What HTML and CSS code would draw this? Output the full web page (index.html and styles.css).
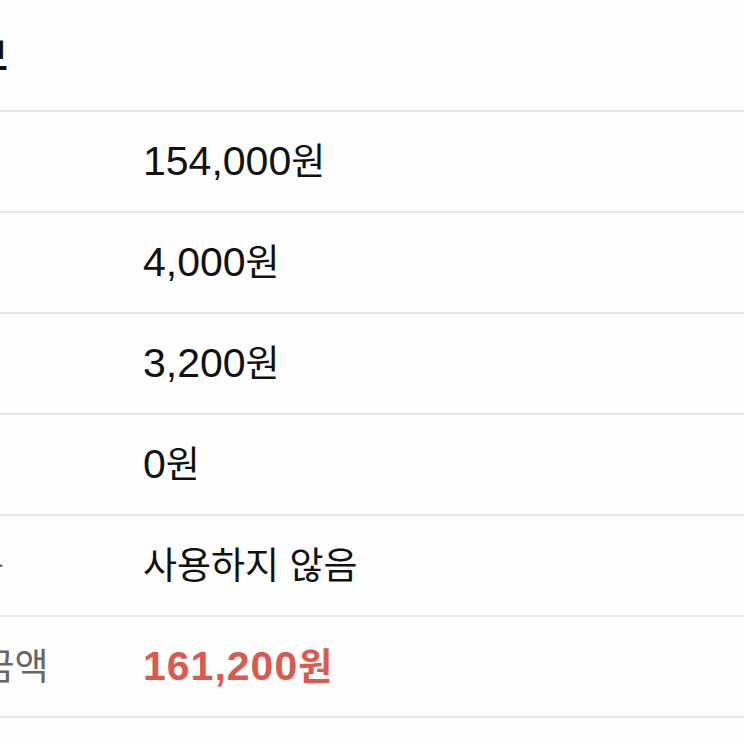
FILE: index.html
```html
<!DOCTYPE html>
<html lang="ko">
<head>
    <meta charset="UTF-8">
    <title>결제정보</title>
    <link rel="stylesheet" href="styles.css">
</head>
<body>
    <div class="sheet">
        <h2 class="sheet-title">결제정보</h2>
        <div class="pay-row">
            <span class="pay-label">상품가</span>
            <span class="pay-value">154,000<span class="unit">원</span></span>
        </div>
        <div class="pay-row">
            <span class="pay-label">배송비</span>
            <span class="pay-value">4,000<span class="unit">원</span></span>
        </div>
        <div class="pay-row">
            <span class="pay-label">수수료</span>
            <span class="pay-value">3,200<span class="unit">원</span></span>
        </div>
        <div class="pay-row">
            <span class="pay-label">포인트</span>
            <span class="pay-value">0<span class="unit">원</span></span>
        </div>
        <div class="pay-row">
            <span class="pay-label">쿠폰사용</span>
            <span class="pay-value ko">사용하지 않음</span>
        </div>
        <div class="pay-row">
            <span class="pay-label">총 결제금액</span>
            <span class="pay-value total">161,200<span class="unit">원</span></span>
        </div>
        <div class="pay-row">
            <span class="pay-label"></span>
            <span class="pay-value"></span>
        </div>
    </div>
</body>
</html>
```

FILE: styles.css
```css
body {
    background: #fefefe;
    font-family: 'Liberation Sans', 'Noto Sans CJK KR', sans-serif;
    margin: 0;
    padding: 0;
    color: #111;
    overflow: hidden;
}

/* the screenshot is cropped: the label column starts off-screen */
.sheet {
    margin-left: -160px;
    width: calc(100% + 160px);
}

.sheet-title {
    margin: 0;
    height: 106px;
    padding: 0 0 4px 28px;
    display: flex;
    align-items: center;
    font-size: 38px;
    font-weight: 700;
    font-family: 'Noto Sans CJK KR', sans-serif;
}

.pay-row {
    display: grid;
    grid-template-columns: 275px 1fr;
    align-items: center;
    height: 94px;
    padding: 0 0 5px 28px;
    border-top: 2px solid #e8e8e8;
}

.pay-label {
    font-family: 'Noto Sans CJK KR', sans-serif;
    font-size: 37px;
    color: #666;
    white-space: nowrap;
}

.pay-value {
    font-size: 41px;
    white-space: nowrap;
}

.unit,
.pay-value.ko {
    font-family: 'Noto Sans CJK KR', sans-serif;
    font-size: 37px;
}

.pay-value.total {
    color: #db5a4e;
    font-weight: 700;
    letter-spacing: 1px;
}

.pay-value.total .unit {
    letter-spacing: 0;
}
```
